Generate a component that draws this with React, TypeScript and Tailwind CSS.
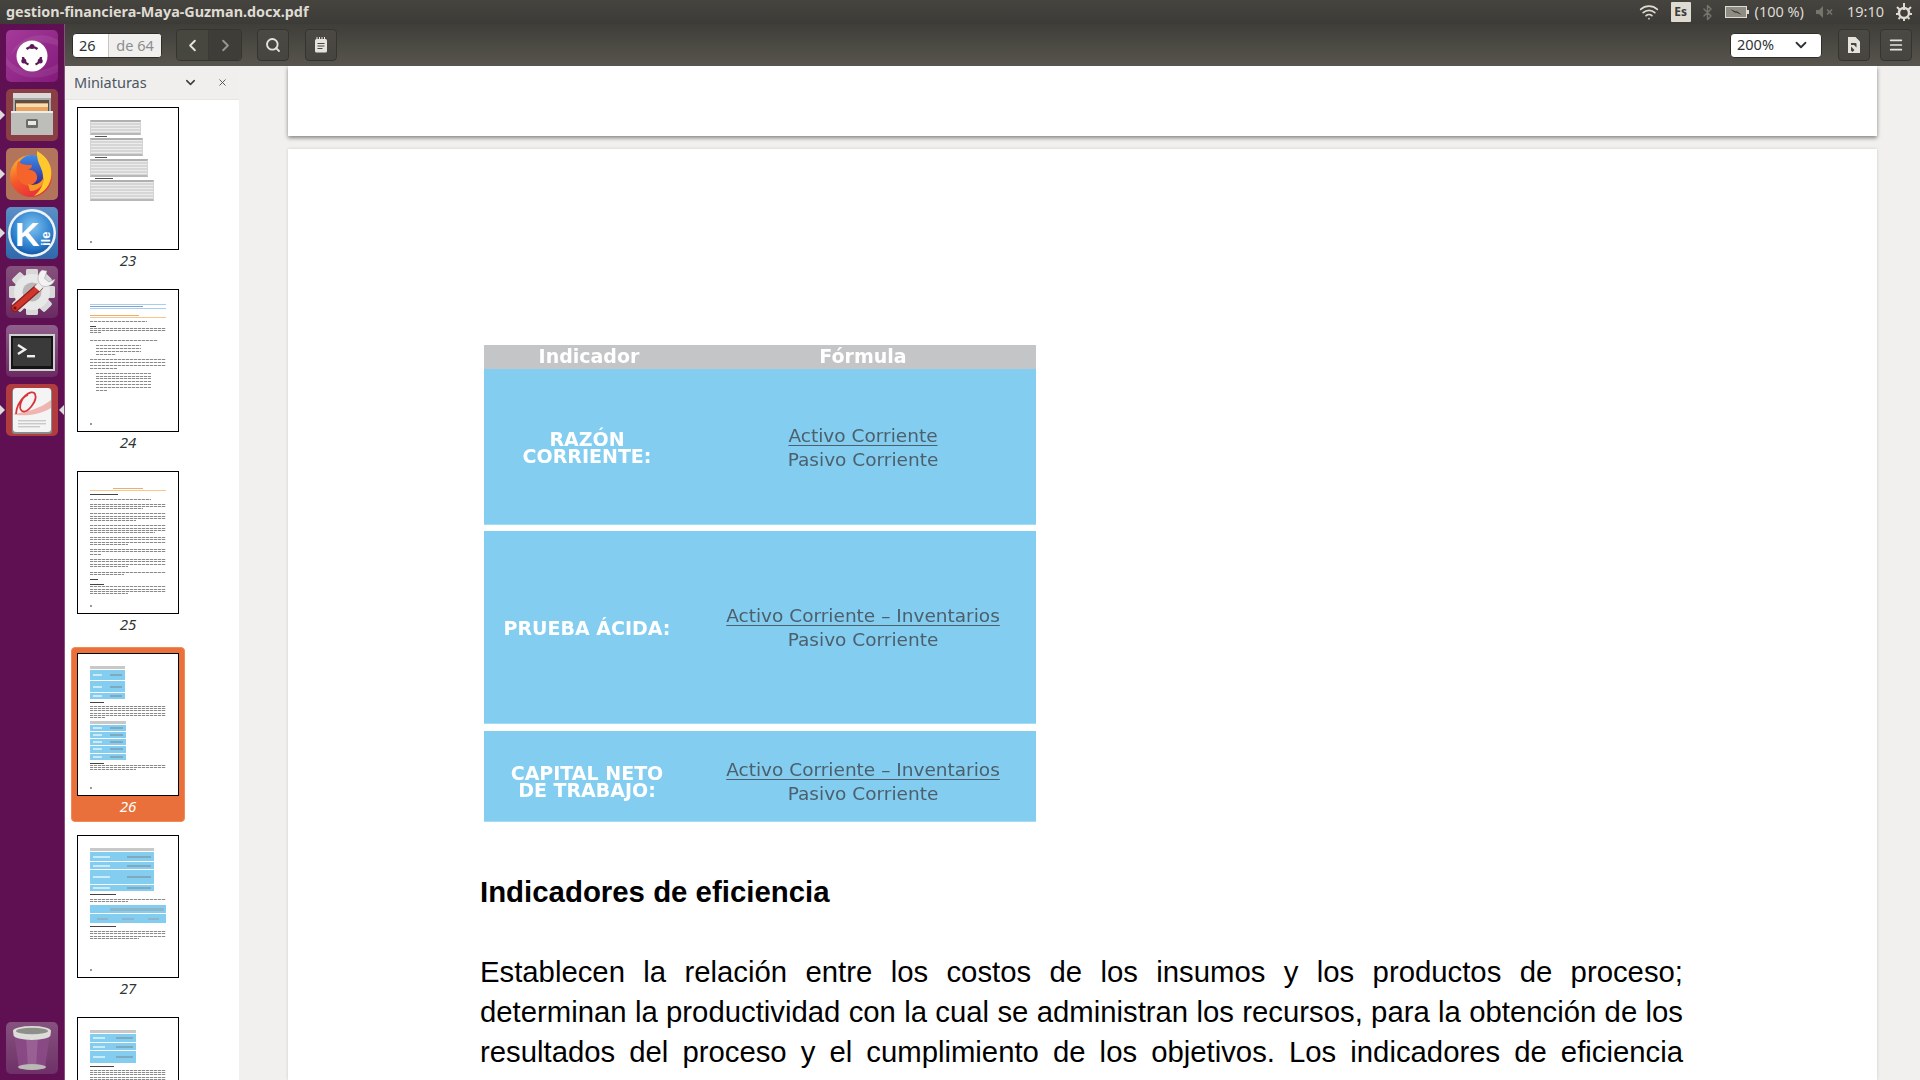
import { ChevronDown, ChevronLeft, ChevronRight, Search, Menu, X, Wifi, Bluetooth } from "lucide-react";
import type { ReactNode } from "react";

const uiFont = "font-['Noto_Sans','Open_Sans',sans-serif]";

function UbuntuIcon() {
  return (
    <svg viewBox="0 0 52 52" className="w-full h-full">
      <path d="M52 10C36 0 12 6 4 26c8-12 26-18 48-10z" fill="#fff" fillOpacity="0.08" />
      <path d="M0 34c10 14 30 18 52 8v-8C34 44 14 44 0 28z" fill="#fff" fillOpacity="0.07" />
      <circle cx="26" cy="26" r="15.5" fill="#fff" />
      <path d="M20.5 19a9 9 0 0 1 11 0M35 27a9 9 0 0 1-5.5 7.5M22.5 34.5A9 9 0 0 1 17 27" fill="none" stroke="#5e1a58" strokeWidth="2.4" />
      <circle cx="26" cy="16.5" r="2.5" fill="#5e1a58" />
      <circle cx="17.8" cy="31" r="2.5" fill="#5e1a58" />
      <circle cx="34.2" cy="31" r="2.5" fill="#5e1a58" />
    </svg>
  );
}

function FilesIcon() {
  return (
    <svg viewBox="0 0 52 52" className="w-full h-full">
      <path d="M7 8l3-4h32l3 4v38H7z" fill="#a9a9a5" />
      <rect x="7" y="4" width="38" height="5" fill="#d9d9d5" />
      <rect x="9" y="11" width="34" height="12" fill="#55504a" />
      <rect x="10" y="14" width="32" height="9" fill="#e8a35e" />
      <rect x="10" y="15" width="32" height="3" fill="#f8dcb4" />
      <path d="M5 22h42v24H5z" fill="#bdbdb9" />
      <rect x="5" y="22" width="42" height="2" fill="#ececea" />
      <rect x="20" y="30" width="12" height="9" rx="1.5" fill="#6b6b68" />
      <rect x="22" y="32" width="8" height="4" fill="#e8e8e8" />
    </svg>
  );
}

function FirefoxIcon() {
  return (
    <svg viewBox="0 0 52 52" className="w-full h-full">
      <defs>
        <linearGradient id="ffo" x1="0.2" y1="0" x2="0.7" y2="1">
          <stop offset="0" stopColor="#fcb52d" />
          <stop offset="0.5" stopColor="#f4562a" />
          <stop offset="1" stopColor="#e52d3e" />
        </linearGradient>
        <linearGradient id="ffb" x1="0.5" y1="0" x2="0.5" y2="1">
          <stop offset="0" stopColor="#3d8bea" />
          <stop offset="1" stopColor="#352a93" />
        </linearGradient>
      </defs>
      <circle cx="25" cy="28" r="21" fill="url(#ffo)" />
      <circle cx="26" cy="22" r="15" fill="url(#ffb)" />
      <path d="M31 3c11 6 16 16 14 27-2 10-9 16-17 18 6-5 9-10 9-17 1-11-7-15-6-28z" fill="#ffc92e" />
      <path d="M12 13c4 4 8 4 14 4 0 3-2 4-5 5 6-1 11 3 10 9-2 6-9 8-14 5-6-4-8-14-5-23z" fill="#f5642a" />
      <path d="M22 36c7 3 14-1 16-8 1 8-5 15-14 15z" fill="#f69a25" />
    </svg>
  );
}

function KileIcon() {
  return (
    <svg viewBox="0 0 52 52" className="w-full h-full">
      <defs>
        <radialGradient id="kb" cx="0.5" cy="0.35" r="0.7">
          <stop offset="0" stopColor="#7cc4f0" />
          <stop offset="0.7" stopColor="#2a7ccb" />
          <stop offset="1" stopColor="#0d4f9c" />
        </radialGradient>
      </defs>
      <circle cx="26" cy="26" r="24" fill="#eef3f8" />
      <circle cx="26" cy="26" r="21.5" fill="url(#kb)" />
      <text x="9" y="39" fontFamily="Liberation Sans, sans-serif" fontWeight="700" fontSize="34" fill="#fff">K</text>
      <text x="0" y="0" fontFamily="Liberation Sans, sans-serif" fontWeight="700" fontSize="13" fill="#fff" transform="translate(44 39) rotate(-90)">ile</text>
    </svg>
  );
}

function SettingsIcon() {
  const teeth = [0, 45, 90, 135, 180, 225, 270, 315];
  return (
    <svg viewBox="0 0 52 52" className="w-full h-full">
      {teeth.map((a) => (
        <rect key={a} x="20" y="3" width="12" height="46" rx="2" fill="#d8d8d8" transform={`rotate(${a} 26 26)`} />
      ))}
      <circle cx="26" cy="26" r="18" fill="#e8e8e8" />
      <circle cx="26" cy="26" r="9.5" fill="#b8b8b8" />
      <path d="M9 42 L33 21" stroke="#8f1d18" strokeWidth="8" strokeLinecap="round" />
      <path d="M9 42 L33 21" stroke="#d0362d" strokeWidth="5.5" strokeLinecap="round" />
      <path d="M31 23 L38 15" stroke="#ededed" strokeWidth="7" />
      <path d="M36 4 A10 10 0 0 0 36 20 A10 10 0 0 0 49 13 L43 16 L38.5 12.5 L41 5 Z" fill="#f2f2f2" stroke="#999" strokeWidth="0.5" />
      <circle cx="9" cy="42" r="1.6" fill="#6c120e" />
    </svg>
  );
}

function TerminalIcon() {
  return (
    <svg viewBox="0 0 52 52" className="w-full h-full">
      <rect x="3" y="9" width="46" height="37" fill="#cfcfcf" />
      <rect x="5" y="11" width="42" height="33" fill="#141414" />
      <rect x="7" y="13" width="38" height="28" fill="#3a3a3a" />
      <path d="M12 20 L19 24.5 L12 29" fill="none" stroke="#f0f0f0" strokeWidth="2.4" />
      <rect x="21" y="30" width="8" height="2.4" fill="#f0f0f0" />
    </svg>
  );
}

function ReaderIcon() {
  return (
    <svg viewBox="0 0 52 52" className="w-full h-full">
      <rect x="6" y="5" width="40" height="45" rx="3" fill="#8a8a8a" />
      <rect x="7" y="4" width="38" height="44" rx="3" fill="#f4f4f4" />
      <path d="M7 30 C20 28 34 25 45 16 L45 24 C33 31 20 32 10 31 Z" fill="#efb5b0" />
      <path d="M10 30 C11 15 26 4 29 10 C32 17 21 30 16 27 C12 24 15 13 22 11" fill="none" stroke="#d8343a" strokeWidth="1.8" />
      <rect x="12" y="36" width="28" height="1.4" fill="#c9c9c9" />
      <rect x="12" y="39" width="28" height="1.4" fill="#c9c9c9" />
      <rect x="12" y="42" width="22" height="1.4" fill="#c9c9c9" />
    </svg>
  );
}

function TrashIcon() {
  return (
    <svg viewBox="0 0 52 52" className="w-full h-full">
      <path d="M8 12 L13 46 H39 L44 12 Z" fill="#8b4a86" fillOpacity="0.9" />
      <path d="M20 14 L22 46 H30 L32 14 Z" fill="#a370a0" fillOpacity="0.6" />
      <ellipse cx="26" cy="45" rx="14" ry="3" fill="#b9b9b5" />
      <path d="M7 9 A19 5 0 0 1 45 9 L44.5 13 A18.5 5 0 0 1 7.5 13 Z" fill="#dcdcd8" />
      <ellipse cx="26" cy="9" rx="16" ry="3.2" fill="#8f8f8a" />
    </svg>
  );
}

function Tile({ bg, children, left, right }: { bg: string; children: ReactNode; left?: boolean; right?: boolean }) {
  return (
    <div className="relative flex justify-center">
      {left && <div className="absolute left-0 top-[21px] w-0 h-0 border-y-[5px] border-y-transparent border-l-[5px] border-l-[#dcdcdc]" />}
      <div className={`w-[52px] h-[52px] rounded-[5px] ${bg}`}>{children}</div>
      {right && <div className="absolute right-0 top-[21px] w-0 h-0 border-y-[5px] border-y-transparent border-r-[5px] border-r-[#dcdcdc]" />}
    </div>
  );
}

function Launcher() {
  return (
    <div className="w-[65px] shrink-0 bg-[#5f1053] border-r border-r-[#87507f] flex flex-col pt-[6px] gap-[7px]">
      <Tile bg="bg-gradient-to-br from-[#a43b9a] to-[#84197c]"><UbuntuIcon /></Tile>
      <Tile bg="bg-[#8a3f47]" left><FilesIcon /></Tile>
      <Tile bg="bg-[#b2745a]" left><FirefoxIcon /></Tile>
      <Tile bg="bg-gradient-to-b from-[#5c8fc6] to-[#2f69ab]" left><KileIcon /></Tile>
      <Tile bg="bg-gradient-to-b from-[#86517d] to-[#6a2a62]"><SettingsIcon /></Tile>
      <Tile bg="bg-gradient-to-b from-[#905f8b] to-[#6a2a62]"><TerminalIcon /></Tile>
      <Tile bg="bg-[#b13c3f]" left right><ReaderIcon /></Tile>
      <div className="mt-auto mb-[6px]">
        <Tile bg="bg-gradient-to-b from-[#85527e] to-[#6f3068]"><TrashIcon /></Tile>
      </div>
    </div>
  );
}

function TopBar() {
  return (
    <div className="h-6 shrink-0 flex items-center pl-[6px] pr-[7px] bg-gradient-to-b from-[#45443f] to-[#3c3b37] text-[#dfdbd2]">
      <span className={`text-[14.35px] font-bold pb-[1px] ${uiFont}`}>gestion-financiera-Maya-Guzman.docx.pdf</span>
      <div className={`ml-auto flex items-center text-[14.5px] ${uiFont}`}>
        <Wifi size={20} strokeWidth={2} />
        <span className="ml-[12px] w-5 h-5 flex items-center justify-center bg-[#dfdbd2] text-[#3c3b37] rounded-[1px] text-[12px] font-bold">Es</span>
        <Bluetooth size={17} className="ml-[8px] text-[#77746c]" />
        <svg viewBox="0 0 24 12" className="ml-[9px] w-6 h-3">
          <rect x="0.5" y="0.5" width="21" height="11" fill="#8f8c83" stroke="#dfdbd2" />
          <rect x="22" y="4" width="2" height="4" fill="#dfdbd2" />
          <path d="M5 3 L12 6 L11 4.5 L17 9 L10 6 L11 7.5 Z" fill="#33322e" />
        </svg>
        <span className="ml-[6px]">(100 %)</span>
        <svg viewBox="0 0 18 12" className="ml-[12px] w-[18px] h-3 text-[#77746c]" fill="currentColor">
          <path d="M0 4h3l4-4v12l-4-4H0z" />
          <path d="M11 3.5l5 5m0-5l-5 5" stroke="currentColor" strokeWidth="1.6" />
        </svg>
        <span className="ml-[13px]">19:10</span>
        <svg viewBox="0 0 18 18" className="ml-[11px] w-[18px] h-[18px]" fill="none" stroke="currentColor">
          <circle cx="9" cy="10" r="5" strokeWidth="2.4" />
          <path d="M9 0v7M2 4l2.5 2.5M16 4l-2.5 2.5M1 11h2.5M15 11h2M3.5 16L5 14.5M14.5 16L13 14.5M9 15.5V18" strokeWidth="2" />
        </svg>
      </div>
    </div>
  );
}

function ToolButton({ children, className = "" }: { children: ReactNode; className?: string }) {
  return (
    <div className={`h-8 w-8 flex items-center justify-center rounded-[4px] border border-[#35342f] bg-gradient-to-b from-[#4a4943] to-[#46453f] text-[#e6e3dd] ${className}`}>
      {children}
    </div>
  );
}

function NotesIcon() {
  return (
    <svg viewBox="0 0 14 16" className="w-[14px] h-4" fill="none" stroke="currentColor">
      <rect x="1" y="2" width="12" height="13.5" rx="1.5" fill="currentColor" stroke="none" />
      <path d="M3.5 6.5h7M3.5 9h7M3.5 11.5h5" stroke="#46453f" strokeWidth="1.1" />
      <path d="M3 0v3M5.5 0v3M8 0v3M10.5 0v3" strokeWidth="1" />
    </svg>
  );
}

function PageModeIcon() {
  return (
    <svg viewBox="0 0 12 16" className="w-3 h-4" fill="currentColor">
      <path d="M0 0h7.5L12 4.5V16H0z" />
      <path d="M3 6h4.5a1 1 0 0 1 1 1v3.5L6 8H3z" fill="#46453f" />
      <path d="M3 9.5l3.5 3.5L4.5 15 3 13.5z" fill="#46453f" />
    </svg>
  );
}

function Toolbar() {
  return (
    <div className={`h-[42px] shrink-0 flex items-center pl-[7px] pr-2 bg-gradient-to-b from-[#3f3e39] to-[#57554d] ${uiFont}`}>
      <div className="w-[90px] h-[25px] flex rounded-[4px] bg-white border border-[#2f2e2a] text-[14.5px] overflow-hidden">
        <div className="w-[36px] pl-[6px] text-[#2e3436] border-r border-r-[#c8c6c2] leading-[23px]">26</div>
        <div className="flex-1 text-center bg-[#f0efed] text-[#8b8e8f] leading-[23px]">de 64</div>
      </div>
      <div className="ml-[14px] flex rounded-[4px] border border-[#35342f] h-8">
        <div className="w-8 flex items-center justify-center text-[#e6e3dd] bg-[#48473f] border-r border-r-[#3b3a35] rounded-l-[4px]">
          <ChevronLeft size={19} strokeWidth={2.4} />
        </div>
        <div className="w-8 flex items-center justify-center text-[#98968e] bg-[#3e3d38] rounded-r-[4px]">
          <ChevronRight size={19} strokeWidth={2.4} />
        </div>
      </div>
      <ToolButton className="ml-[15px]"><Search size={16} strokeWidth={2.8} /></ToolButton>
      <ToolButton className="ml-4"><NotesIcon /></ToolButton>
      <div className="ml-auto w-[92px] h-[25px] flex items-center pl-[6px] pr-[11px] rounded-[4px] bg-white border border-[#2f2e2a] text-[#2e3436] text-[14.5px]">
        200%
        <ChevronDown size={18} strokeWidth={2.4} className="ml-auto" />
      </div>
      <ToolButton className="ml-4"><PageModeIcon /></ToolButton>
      <ToolButton className="ml-[10px]"><Menu size={16} strokeWidth={2.6} /></ToolButton>
    </div>
  );
}

// thumbnail pieces, blurred on purpose since the pages are tiny previews
function Lines({ n, last = "w-[60%]", gap = "gap-[1.2px]" }: { n: number; last?: string; gap?: string }) {
  return (
    <div className={`flex flex-col ${gap}`}>
      {Array.from({ length: n }).map((_, i) => (
        <div
          key={i}
          className={`h-[1px] bg-[repeating-linear-gradient(90deg,#8a8a8a_0_3px,#e2e2e2_3px_4px)] ${i === n - 1 ? last : "w-full"}`}
        />
      ))}
    </div>
  );
}

function Head({ w = "w-[18px]" }: { w?: string }) {
  return <div className={`h-[1px] bg-[#444] ${w}`} />;
}

function GrayTable({ w, h }: { w: string; h: string }) {
  return (
    <div className={`${w} ${h} border-t-2 border-t-[#b0b0b0] border-b-2 border-b-[#b8b8b8] border-x border-x-[#d4d4d4] bg-[repeating-linear-gradient(180deg,#ececec_0_1px,#d6d6d6_1px_3px)]`} />
  );
}

function BlueTable({ w, rows }: { w: string; rows: string[] }) {
  return (
    <div className={`${w} flex flex-col gap-[1px]`}>
      <div className="h-[3px] bg-[#c8c8c8]" />
      {rows.map((h, i) => (
        <div key={i} className={`${h} bg-[#83cdf0] flex items-center justify-between px-[3px]`}>
          <div className="w-[30%] h-[2px] bg-[#c9ebfa]" />
          <div className="w-[42%] h-[2px] bg-[#7fa9bf]" />
        </div>
      ))}
    </div>
  );
}

function Mark() {
  return <div className="mt-auto mb-[2px] w-[2px] h-[2px] bg-[#999]" />;
}

function Page23() {
  return (
    <>
      <GrayTable w="w-[51px]" h="h-[15px]" />
      <div className="ml-[5px] mt-[1px] w-[12px] h-[1px] bg-[#555]" />
      <div className="mt-[1px]"><GrayTable w="w-[53px]" h="h-[18px]" /></div>
      <div className="ml-[5px] mt-[1px] w-[12px] h-[1px] bg-[#555]" />
      <div className="mt-[1px]"><GrayTable w="w-[58px]" h="h-[18px]" /></div>
      <div className="ml-[5px] mt-[1px] w-[18px] h-[1px] bg-[#555]" />
      <div className="mt-[1px]"><GrayTable w="w-[64px]" h="h-[21px]" /></div>
      <Mark />
    </>
  );
}

function Page24() {
  return (
    <>
      <div className="mt-[2px] border-y border-y-[#a8cdf0] h-[5px] flex items-center"><div className="w-[70%] h-[1px] bg-[#7fa3cc]" /></div>
      <div className="mt-[6px] w-full border-b border-b-[#f6c78c] pb-[1px]"><div className="w-[65%] h-[1px] bg-[#e9b06a]" /></div>
      <div className="mt-[3px]"><Lines n={1} last="w-[75%]" /></div>
      <div className="mt-[4px]"><Head w="w-[6px]" /></div>
      <div className="mt-[1px]"><Lines n={3} last="w-[15%]" /></div>
      <div className="mt-[6.5px]"><Lines n={1} last="w-[90%]" /></div>
      <div className="mt-[4px] ml-[6px] w-[45px]"><Lines n={4} last="w-[45%]" gap="gap-[2px]" /></div>
      <div className="mt-[4px]"><Lines n={4} last="w-[35%]" gap="gap-[2px]" /></div>
      <div className="mt-[4px] ml-[6px] w-[55px]"><Lines n={7} last="w-[20%]" gap="gap-[1.8px]" /></div>
      <Mark />
    </>
  );
}

function Page25() {
  return (
    <>
      <div className="mt-[4px] border-b border-b-[#f6c78c] pb-[1px] flex justify-center"><div className="w-[40%] h-[1px] bg-[#e9b06a]" /></div>
      <div className="mt-[3px]"><Head w="w-[28px]" /></div>
      <div className="mt-[4px]"><Lines n={1} last="w-[80%]" /></div>
      <div className="mt-[4px]"><Lines n={3} last="w-[70%]" /></div>
      <div className="mt-[4px]"><Lines n={4} last="w-[60%]" /></div>
      <div className="mt-[4.4px]"><Lines n={4} last="w-[85%]" /></div>
      <div className="mt-[4.4px]"><Lines n={4} last="w-[50%]" /></div>
      <div className="mt-[4.4px]"><Lines n={3} last="w-[15%]" /></div>
      <div className="mt-[4.6px]"><Lines n={4} last="w-[50%]" /></div>
      <div className="mt-[5.4px]"><Lines n={2} last="w-[45%]" /></div>
      <div className="mt-[4px]"><Head w="w-[8px]" /></div>
      <div className="mt-[4px]"><Head w="w-[14px]" /></div>
      <div className="mt-[1px]"><Lines n={4} last="w-[50%]" /></div>
      <Mark />
    </>
  );
}

function Page26() {
  return (
    <>
      <BlueTable w="w-[35px]" rows={["h-[10px]", "h-[11px]", "h-[6px]"]} />
      <div className="mt-[3px]"><Head w="w-[14px]" /></div>
      <div className="mt-[3px]"><Lines n={6} last="w-[20%]" /></div>
      <div className="mt-[3px]">
        <BlueTable w="w-[36px]" rows={["h-[6px]", "h-[6px]", "h-[6px]", "h-[7px]", "h-[6px]"]} />
      </div>
      <div className="mt-[3px]"><Head w="w-[14px]" /></div>
      <div className="mt-[1px]"><Lines n={3} last="w-[60%]" /></div>
      <Mark />
    </>
  );
}

function Page27() {
  return (
    <>
      <BlueTable w="w-[64px]" rows={["h-[9px]", "h-[7px]", "h-[14px]", "h-[6px]"]} />
      <div className="mt-[3px]"><Head w="w-[26px]" /></div>
      <div className="mt-[4px]"><Lines n={2} last="w-[50%]" /></div>
      <div className="mt-[3px] flex flex-col gap-[1px]">
        <div className="h-[8px] bg-[#83cdf0] flex items-center justify-end px-[2px]"><div className="w-[75%] h-[3px] bg-[#8fb5c9]" /></div>
        <div className="h-[9px] bg-[#83cdf0] flex items-center justify-around"><div className="w-[15%] h-[2px] bg-[#8fb5c9]" /><div className="w-[15%] h-[2px] bg-[#8fb5c9]" /><div className="w-[15%] h-[2px] bg-[#8fb5c9]" /></div>
      </div>
      <div className="mt-[3px]"><Head w="w-[26px]" /></div>
      <div className="mt-[4px]"><Lines n={4} last="w-[65%]" /></div>
      <Mark />
    </>
  );
}

function Page28() {
  return (
    <>
      <BlueTable w="w-[46px]" rows={["h-[8px]", "h-[7px]", "h-[12px]"]} />
      <div className="mt-[3px]"><Head w="w-[24px]" /></div>
      <div className="mt-[3px]"><Lines n={6} last="w-full" /></div>
    </>
  );
}

const thumbs = [
  { n: 23, page: <Page23 /> },
  { n: 24, page: <Page24 /> },
  { n: 25, page: <Page25 /> },
  { n: 26, page: <Page26 />, active: true },
  { n: 27, page: <Page27 /> },
  { n: 28, page: <Page28 /> },
];

function Sidebar() {
  return (
    <div className={`w-[174px] shrink-0 flex flex-col bg-white ${uiFont}`}>
      <div className="h-[34px] shrink-0 flex items-center pl-[9px] bg-[#f0efed] border-b border-b-[#e6e5e2] text-[#4a5663] text-[14.5px]">
        Miniaturas
        <ChevronDown size={15} strokeWidth={2.4} className="ml-[36px] text-[#3a3d3f]" />
        <X size={11} strokeWidth={2} className="ml-[19px] text-[#4a4f55]" />
      </div>
      <div className="flex-1 overflow-hidden pl-[6px] pt-[1px] flex flex-col gap-[7px]">
        {thumbs.map((t) => (
          <div
            key={t.n}
            className={`w-[114px] shrink-0 h-[175px] flex flex-col items-center pt-[6px] rounded-[4px] ${t.active ? "bg-[#e9703a] border border-[#f08a58]" : ""}`}
          >
            <div className={`w-[102px] h-[143px] shrink-0 bg-white border border-black flex flex-col pl-[12px] pr-[12px] pt-[12px] pb-[4px] overflow-hidden ${t.active ? "-mt-px" : ""}`}>
              <div className="flex-1 flex flex-col blur-[0.45px]">{t.page}</div>
            </div>
            <div className={`text-[15px] italic -mt-px ${t.active ? "text-white" : "text-[#2e3436]"}`}>{t.n}</div>
          </div>
        ))}
      </div>
    </div>
  );
}

function FormulaRow({ h, label, top, extra = "", pad = "pt-[2px]" }: { h: string; label: ReactNode; top: string; extra?: string; pad?: string }) {
  return (
    <div className={`${h} ${extra} bg-[#83cdf0] grid grid-cols-[206px_1fr] items-center border-b border-b-[#a4dcf4] ${pad}`}>
      <div className="text-center text-white font-bold text-[19px] leading-[17px] font-['DejaVu_Sans',sans-serif] whitespace-nowrap">{label}</div>
      <div className="text-center text-[#4c5f6b] text-[18.5px] leading-[24px] font-['DejaVu_Sans',sans-serif]">
        <div className="underline underline-offset-[3px] decoration-1">{top}</div>
        <div>Pasivo Corriente</div>
      </div>
    </div>
  );
}

function IndicatorTable() {
  return (
    <div className="w-[552px] ml-[4px] flex flex-col blur-[0.3px]">
      <div className="h-[24px] bg-[#c4c5c7] grid grid-cols-[206px_1fr] items-center text-center text-white font-bold text-[19px] leading-[22px] font-['DejaVu_Sans',sans-serif] pb-[3px]">
        <div className="pl-[4px]">Indicador</div>
        <div>Fórmula</div>
      </div>
      <FormulaRow h="h-[156px]" label={<>RAZÓN<br />CORRIENTE:</>} top="Activo Corriente" />
      <FormulaRow h="h-[193px]" extra="mt-[6px]" label={<>PRUEBA ÁCIDA:</>} top="Activo Corriente – Inventarios" />
      <FormulaRow h="h-[91px]" extra="mt-[7px]" pad="pt-[11px]" label={<>CAPITAL NETO<br />DE TRABAJO:</>} top="Activo Corriente – Inventarios" />
    </div>
  );
}

function Document() {
  return (
    <div className="flex-1 overflow-hidden bg-[#f1f0ee] pl-[49px] pr-[43px] flex flex-col gap-[13px]">
      <div className="h-[70px] shrink-0 bg-white shadow-[0_2px_4px_rgba(0,0,0,0.45)]" />
      <div className="flex-1 bg-white shadow-[0_0_3px_rgba(0,0,0,0.15)] pt-[196px] pl-[192px] pr-[194px] font-['Liberation_Sans',Arial,sans-serif] text-black">
        <IndicatorTable />
        <h2 className="mt-[53px] text-[29.4px] leading-[34px] font-bold">Indicadores de eficiencia</h2>
        <p className="mt-[43px] text-[29.3px] leading-[40.2px] text-justify [text-align-last:justify]">
          Establecen la relación entre los costos de los insumos y los productos de proceso; determinan la productividad con la cual se administran los recursos, para la obtención de los resultados del proceso y el cumplimiento de los objetivos. Los indicadores de eficiencia
        </p>
      </div>
    </div>
  );
}

export default function App() {
  return (
    <div className="h-screen w-screen overflow-hidden flex flex-col">
      <TopBar />
      <div className="flex-1 flex min-h-0">
        <Launcher />
        <div className="flex-1 flex flex-col min-w-0">
          <Toolbar />
          <div className="flex-1 flex min-h-0">
            <Sidebar />
            <Document />
          </div>
        </div>
      </div>
    </div>
  );
}
